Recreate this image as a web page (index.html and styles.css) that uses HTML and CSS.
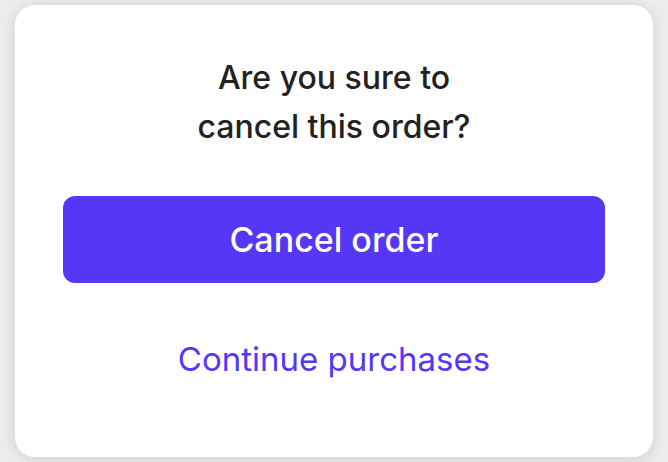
FILE: index.html
```html
<!DOCTYPE html>
<html lang="en">
<head>
  <meta charset="UTF-8" />
  <meta name="viewport" content="width=device-width, initial-scale=1" />
  <title>Cancel order</title>
  <link rel="stylesheet" href="styles.css">
</head>
<body>
  <div class="dialog">
    <h2 class="dialog-title">Are you sure to<br>cancel this order?</h2>
    <button class="btn-primary" type="button">Cancel order</button>
    <a class="link-secondary" href="#">Continue purchases</a>
  </div>
</body>
</html>
```

FILE: styles.css
```css
:root {
  --purple: #5438f5;
  --text: #222;
  font-family: "Inter", "Noto Sans", sans-serif;
}

* {
  box-sizing: border-box;
  margin: 0;
  padding: 0;
}

body {
  width: 668px;
  height: 462px;
  background: #ececec;
  padding: 5px 15px;
  overflow: hidden;
}

.dialog {
  height: 452px;
  background: #fff;
  border-radius: 20px;
  box-shadow: 0 2px 14px rgba(0, 0, 0, 0.12);
  padding: 48px 48px 0;
  display: flex;
  flex-direction: column;
  align-items: stretch;
  text-align: center;
}

.dialog-title {
  font-size: 32px;
  font-weight: 500;
  line-height: 49px;
  color: var(--text);
  margin-bottom: 45px;
}

.btn-primary {
  height: 87px;
  border: none;
  border-radius: 12px;
  background: var(--purple);
  color: #fff;
  font-family: inherit;
  font-size: 34px;
  font-weight: 500;
  cursor: pointer;
}

.link-secondary {
  margin-top: 52px;
  font-size: 33px;
  line-height: 48px;
  color: var(--purple);
  text-decoration: none;
}
```
